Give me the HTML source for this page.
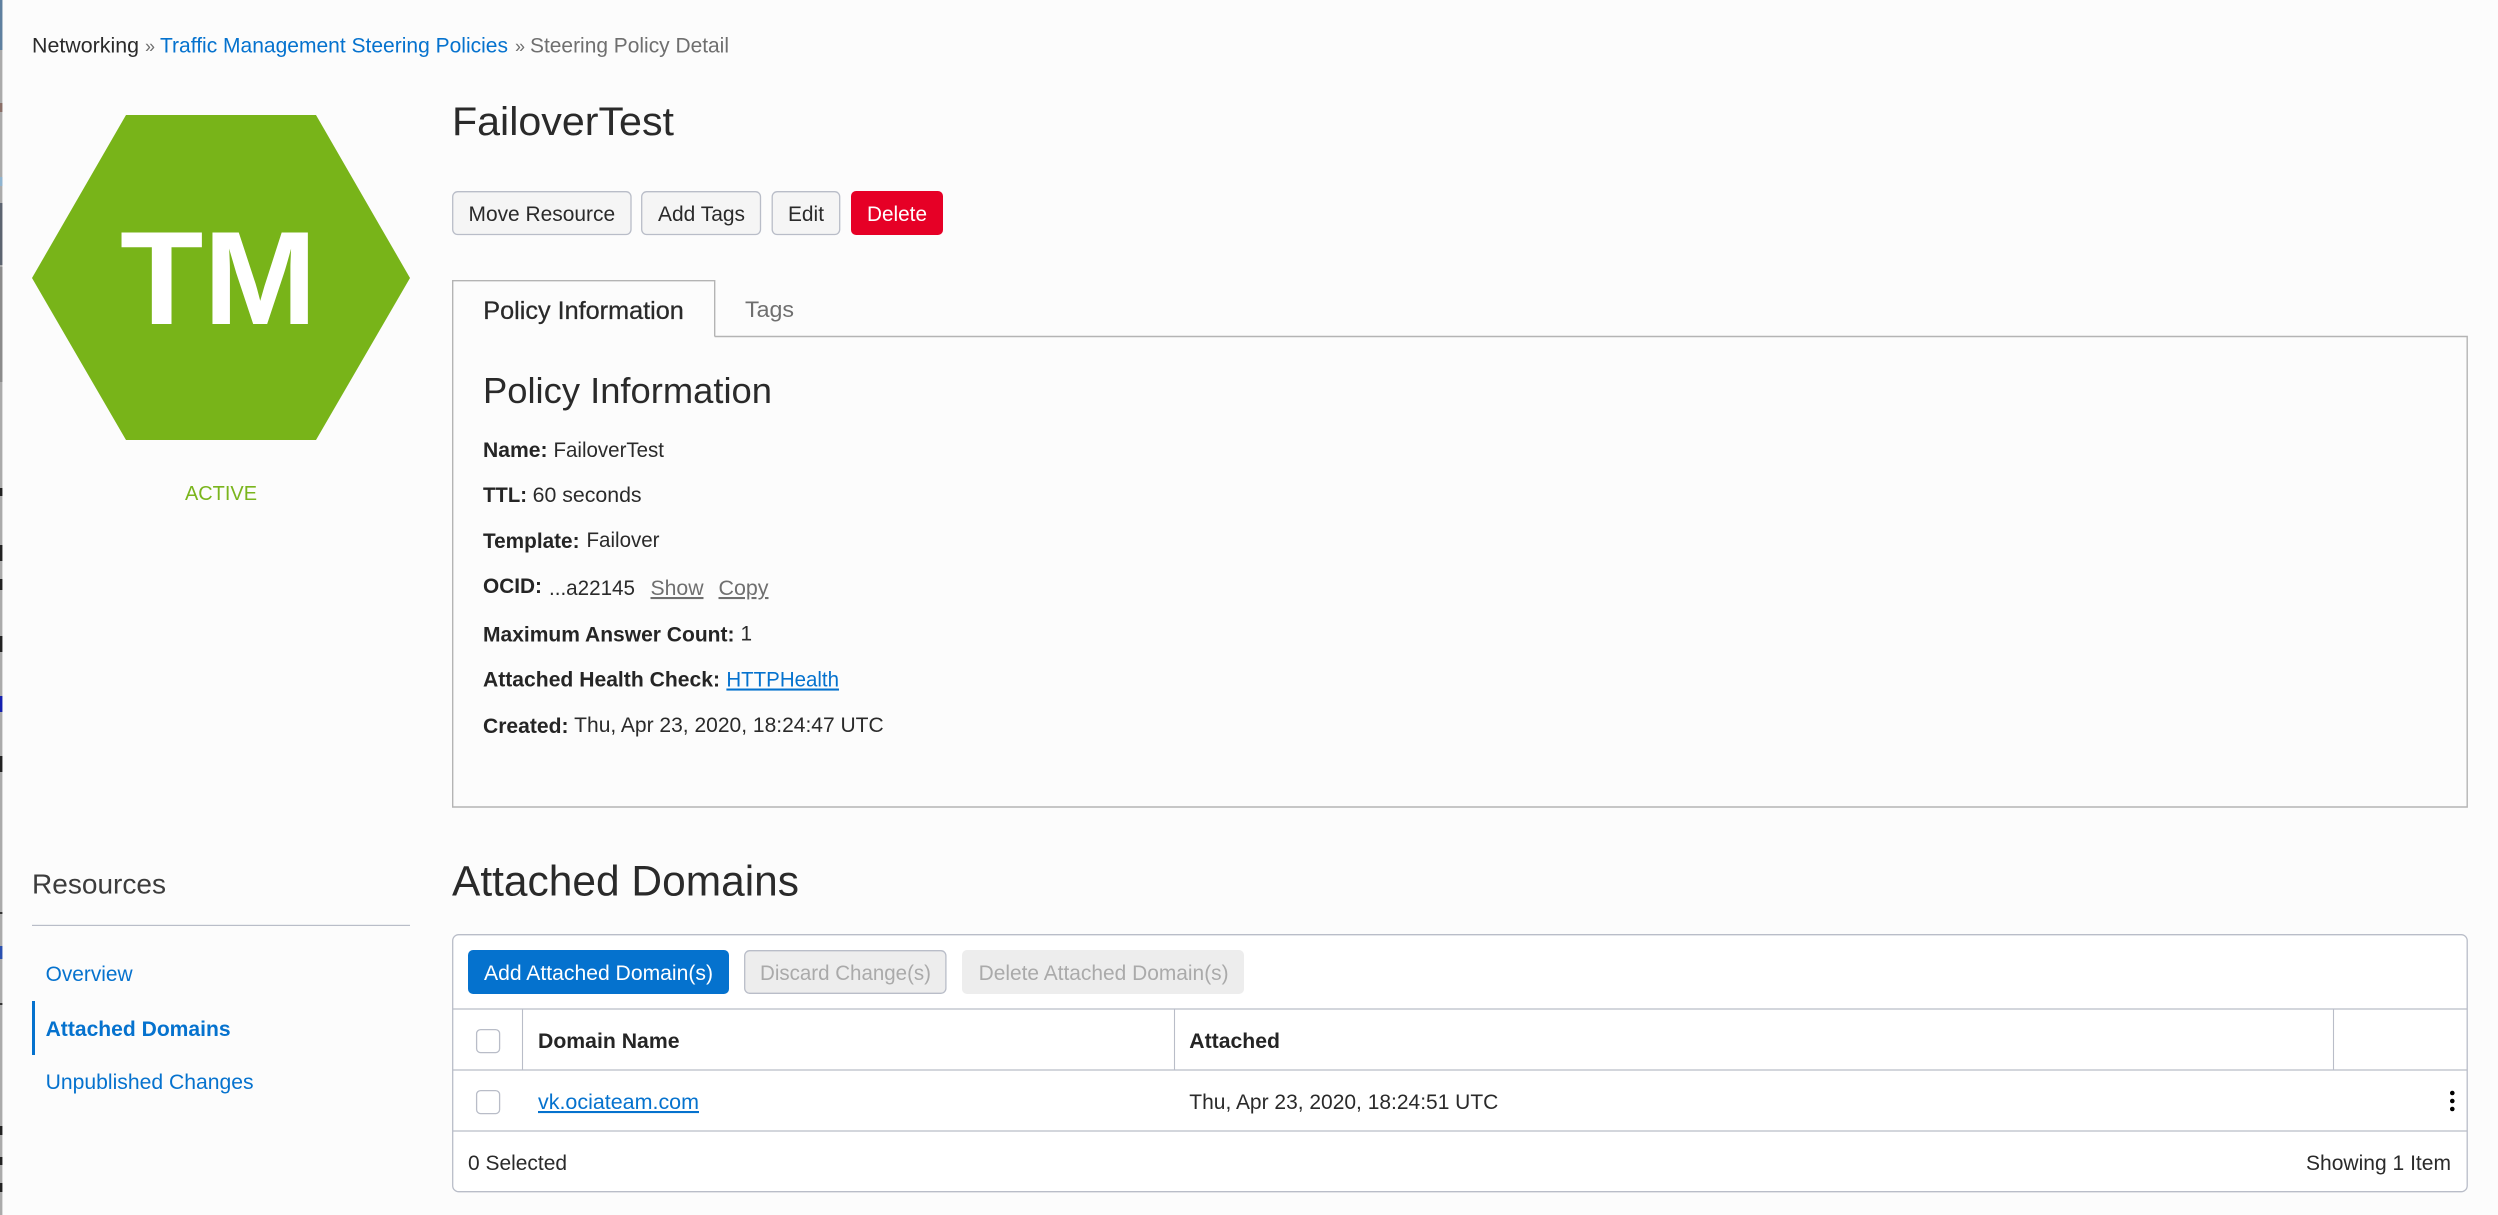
<!DOCTYPE html>
<html lang="en">
<head>
<meta charset="utf-8">
<title>Steering Policy Detail</title>
<style>
html,body{margin:0;padding:0;background:#fcfcfc;width:2498px;height:1215px;overflow:hidden}
svg{display:block;position:absolute;left:0;top:0}
text{font-family:"Liberation Sans",Arial,sans-serif;font-size:20.8px;fill:#2a2a2a;white-space:pre}
.b{font-weight:700;fill:#252525}
.l{fill:#0572ce}
.u{text-decoration:underline}
.g{fill:#6f6f6f}
.d{fill:#aaaaaa}
.ln{stroke:#b9bdc8;stroke-width:1.3;fill:none}
.pn{stroke:#b4b4b4;stroke-width:1.4;fill:none}
</style>
</head>
<body>
<svg width="2498" height="1215" viewBox="0 0 2498 1215" xmlns="http://www.w3.org/2000/svg">
  <rect width="2498" height="1215" fill="#fcfcfc"/>

  <!-- left window edge -->
  <rect x="0" y="0" width="2.4" height="1215" fill="#ababab"/>
  <rect x="0" y="0" width="2.4" height="50" fill="#5f80a0"/>
  <rect x="0" y="103" width="2.4" height="9" fill="#8a6f68"/>
  <rect x="0" y="177" width="2.4" height="9" fill="#8fb4d0"/>
  <rect x="0" y="203" width="2.4" height="62" fill="#5c6470"/>
  <rect x="0" y="267" width="2.4" height="115" fill="#8c8c8c"/>
  <rect x="0" y="488" width="2.4" height="8" fill="#222"/>
  <rect x="0" y="545" width="2.4" height="16" fill="#222"/>
  <rect x="0" y="579" width="2.4" height="11" fill="#222"/>
  <rect x="0" y="636" width="2.4" height="16" fill="#222"/>
  <rect x="0" y="696" width="2.4" height="16" fill="#1520b0"/>
  <rect x="0" y="756" width="2.4" height="16" fill="#222"/>
  <rect x="0" y="912" width="2.4" height="2" fill="#333"/>
  <rect x="0" y="946" width="2.4" height="13" fill="#2a50b0"/>
  <rect x="0" y="1003" width="2.4" height="2" fill="#333"/>
  <rect x="0" y="1126" width="2.4" height="9" fill="#222"/>
  <rect x="0" y="1157" width="2.4" height="8" fill="#222"/>
  <rect x="0" y="1183" width="2.4" height="9" fill="#222"/>

  <!-- breadcrumb -->
  <text x="32" y="52.5" textLength="107" lengthAdjust="spacingAndGlyphs">Networking</text>
  <text x="145" y="52.5" class="g" style="font-size:18px">»</text>
  <text x="160" y="52.5" class="l" textLength="348" lengthAdjust="spacingAndGlyphs">Traffic Management Steering Policies</text>
  <text x="515" y="52.5" class="g" style="font-size:18px">»</text>
  <text x="530" y="52.5" class="g" textLength="199" lengthAdjust="spacingAndGlyphs">Steering Policy Detail</text>

  <!-- hexagon -->
  <polygon points="126,115 316,115 410,278 316,440 126,440 32,278" fill="#78b419"/>
  <text x="120" y="324" class="b" style="font-size:133px;fill:#fff" textLength="197" lengthAdjust="spacingAndGlyphs">TM</text>
  <text x="185" y="500" style="fill:#7ab51d;font-size:20px" textLength="72" lengthAdjust="spacingAndGlyphs">ACTIVE</text>

  <!-- title -->
  <text x="452" y="135" style="font-size:40.2px" textLength="222" lengthAdjust="spacingAndGlyphs">FailoverTest</text>

  <!-- action buttons -->
  <rect x="452.7" y="191.7" width="178.3" height="42.8" rx="5" fill="#f5f5f5" stroke="#b9bdc8" stroke-width="1.3"/>
  <text x="468.5" y="221" textLength="146.6" lengthAdjust="spacingAndGlyphs">Move Resource</text>
  <rect x="641.7" y="191.7" width="118.8" height="42.8" rx="5" fill="#f5f5f5" stroke="#b9bdc8" stroke-width="1.3"/>
  <text x="658" y="221" textLength="87" lengthAdjust="spacingAndGlyphs">Add Tags</text>
  <rect x="772.2" y="191.7" width="67.5" height="42.8" rx="5" fill="#f5f5f5" stroke="#b9bdc8" stroke-width="1.3"/>
  <text x="788" y="221" textLength="36" lengthAdjust="spacingAndGlyphs">Edit</text>
  <rect x="851" y="191" width="92" height="44" rx="5" fill="#e60026"/>
  <text x="867" y="221" style="fill:#fff" textLength="60" lengthAdjust="spacingAndGlyphs">Delete</text>

  <!-- tabs and panel -->
  <path class="pn" d="M714.7 336.5 H2467.2 V807 H452.7 V280.7 H714.7 V336.5"/>
  <text x="483.3" y="319" style="font-size:25px;stroke:#252525;stroke-width:.25" textLength="200.5" lengthAdjust="spacingAndGlyphs">Policy Information</text>
  <text x="745" y="317" class="g" style="font-size:22.4px" textLength="49" lengthAdjust="spacingAndGlyphs">Tags</text>

  <text x="483" y="403" style="font-size:36.2px" textLength="289" lengthAdjust="spacingAndGlyphs">Policy Information</text>

  <text x="483" y="457" class="b" textLength="64.5" lengthAdjust="spacingAndGlyphs">Name:</text>
  <text x="553.5" y="457" textLength="110.5" lengthAdjust="spacingAndGlyphs">FailoverTest</text>

  <text x="483" y="502" class="b" textLength="44" lengthAdjust="spacingAndGlyphs">TTL:</text>
  <text x="532.6" y="502" textLength="109" lengthAdjust="spacingAndGlyphs">60 seconds</text>

  <text x="483" y="548" class="b" textLength="96.5" lengthAdjust="spacingAndGlyphs">Template:</text>
  <text x="586.5" y="547" textLength="73" lengthAdjust="spacingAndGlyphs">Failover</text>

  <text x="483" y="593" class="b" textLength="59" lengthAdjust="spacingAndGlyphs">OCID:</text>
  <text x="549" y="595" textLength="86" lengthAdjust="spacingAndGlyphs">...a22145</text>
  <text x="650.5" y="595" class="g u" textLength="53" lengthAdjust="spacingAndGlyphs">Show</text>
  <text x="718.5" y="595" class="g u" textLength="50" lengthAdjust="spacingAndGlyphs">Copy</text>

  <text x="483" y="641.5" class="b" textLength="251.5" lengthAdjust="spacingAndGlyphs">Maximum Answer Count:</text>
  <text x="740.5" y="640.5">1</text>

  <text x="483" y="686.5" class="b" textLength="237" lengthAdjust="spacingAndGlyphs">Attached Health Check:</text>
  <text x="726.4" y="686.5" class="l u" textLength="112.6" lengthAdjust="spacingAndGlyphs">HTTPHealth</text>

  <text x="483" y="733" class="b" textLength="85.5" lengthAdjust="spacingAndGlyphs">Created:</text>
  <text x="574.2" y="732" textLength="309.5" lengthAdjust="spacingAndGlyphs">Thu, Apr 23, 2020, 18:24:47 UTC</text>

  <!-- resources sidebar -->
  <text x="32" y="893.5" style="font-size:28px;fill:#3c3c3c" textLength="134" lengthAdjust="spacingAndGlyphs">Resources</text>
  <rect x="32" y="924.8" width="378" height="1.2" fill="#b9bdc8"/>
  <text x="45.6" y="981" class="l" textLength="87" lengthAdjust="spacingAndGlyphs">Overview</text>
  <rect x="32" y="1001" width="3" height="54" fill="#0572ce"/>
  <text x="45.6" y="1036" class="l b" style="fill:#0572ce" textLength="185" lengthAdjust="spacingAndGlyphs">Attached Domains</text>
  <text x="45.6" y="1089" class="l" textLength="208" lengthAdjust="spacingAndGlyphs">Unpublished Changes</text>

  <!-- attached domains -->
  <text x="452" y="895.5" style="font-size:42.5px" textLength="347" lengthAdjust="spacingAndGlyphs">Attached Domains</text>

  <rect x="452.7" y="934.7" width="2014.5" height="257" rx="6" fill="#ffffff" stroke="#b9bdc8" stroke-width="1.3"/>
  <rect x="468" y="950" width="261" height="44" rx="5" fill="#0572ce"/>
  <text x="484" y="980" style="fill:#fff" textLength="229" lengthAdjust="spacingAndGlyphs">Add Attached Domain(s)</text>
  <rect x="744.7" y="950.7" width="201.2" height="42.6" rx="5" fill="#ededed" stroke="#b9bdc8" stroke-width="1.3"/>
  <text x="760" y="980" class="d" textLength="171" lengthAdjust="spacingAndGlyphs">Discard Change(s)</text>
  <rect x="962" y="950" width="282" height="44" rx="5" fill="#ededed"/>
  <text x="978.6" y="980" class="d" textLength="250" lengthAdjust="spacingAndGlyphs">Delete Attached Domain(s)</text>

  <path class="ln" d="M453 1009 H2467 M453 1070 H2467 M453 1131 H2467"/>
  <path class="ln" d="M522.5 1009 V1070 M1174.5 1009 V1070 M2333.5 1009 V1070" style="stroke-width:1.1"/>

  <rect x="476.6" y="1029.6" width="23" height="23" rx="4" fill="#fff" stroke="#b9bdc8" stroke-width="1.3"/>
  <text x="538" y="1048" class="b" textLength="141.5" lengthAdjust="spacingAndGlyphs">Domain Name</text>
  <text x="1189.3" y="1048" class="b" textLength="90.7" lengthAdjust="spacingAndGlyphs">Attached</text>

  <rect x="476.6" y="1090.6" width="23" height="23" rx="4" fill="#fff" stroke="#b9bdc8" stroke-width="1.3"/>
  <text x="538" y="1109" class="l u" textLength="161" lengthAdjust="spacingAndGlyphs">vk.ociateam.com</text>
  <text x="1189.3" y="1109" textLength="309" lengthAdjust="spacingAndGlyphs">Thu, Apr 23, 2020, 18:24:51 UTC</text>
  <circle cx="2452.3" cy="1093" r="2.3" fill="#000"/>
  <circle cx="2452.3" cy="1101" r="2.3" fill="#000"/>
  <circle cx="2452.3" cy="1109" r="2.3" fill="#000"/>

  <text x="468" y="1170" textLength="99" lengthAdjust="spacingAndGlyphs">0 Selected</text>
  <text x="2306" y="1170" textLength="145" lengthAdjust="spacingAndGlyphs">Showing 1 Item</text>
</svg>
</body>
</html>
